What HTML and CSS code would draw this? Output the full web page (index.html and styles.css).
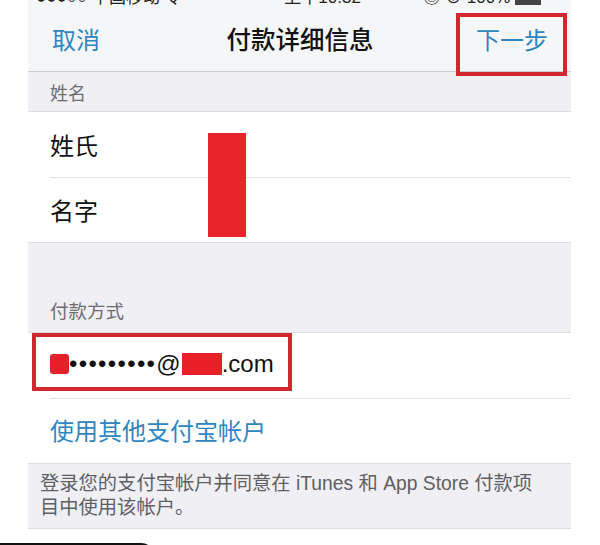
FILE: index.html
```html
<!DOCTYPE html>
<html lang="zh-CN">
<head>
<meta charset="utf-8">
<title>付款详细信息</title>
<link rel="stylesheet" href="styles.css">
</head>
<body>
<div class="phone">
  <div class="statusbar">
    <div class="status-inner">
      <span class="st-left">●●●○○ 中国移动 令</span>
      <span class="st-mid">上午10:32</span>
      <span class="st-right">◎ ⊕ 100% <span class="battery"></span></span>
    </div>
  </div>
  <div class="nav">
    <span class="nav-left">取消</span>
    <span class="nav-title">付款详细信息</span>
    <span class="nav-right">下一步</span>
  </div>
  <div class="section-header">姓名</div>
  <div class="group">
    <div class="row"><span class="label">姓氏</span></div>
    <div class="row inset"><span class="label">名字</span></div>
  </div>
  <div class="gap"><span class="gap-label">付款方式</span></div>
  <div class="group">
    <div class="row"><span class="email"><span class="redact-a"></span><span class="dots">•••••••••</span>@<span class="redact-b"></span>.com</span></div>
    <div class="row inset"><span class="link">使用其他支付宝帐户</span></div>
  </div>
  <div class="footer">登录您的支付宝帐户并同意在 iTunes 和 App Store 付款项目中使用该帐户。</div>

  <div class="mark mark-next"></div>
  <div class="mark mark-email"></div>
  <div class="redact-names"></div>
</div>
<div class="dock"></div>
</body>
</html>
```

FILE: styles.css
```css
* { box-sizing: border-box; }
html, body { margin: 0; padding: 0; background: #ffffff; }
body {
  font-family: "Liberation Sans", "Noto Sans CJK SC", sans-serif;
  color: #111;
  width: 600px;
  height: 545px;
  overflow: hidden;
}
.phone {
  position: relative;
  margin-left: 28px;
  width: 543px;
}
.statusbar {
  height: 9px;
  overflow: hidden;
  background: #f5f6f8;
}
.status-inner {
  margin-top: -12px;
  height: 20px;
  line-height: 20px;
  font-size: 17px;
  color: #222;
  display: flex;
  justify-content: space-between;
  padding: 0 30px 0 8px;
}
.st-mid { margin-left: 40px; }
.battery {
  display: inline-block;
  width: 26px;
  height: 12px;
  background: #444;
  vertical-align: middle;
}
.nav {
  height: 63px;
  background: #f5f6f8;
  border-bottom: 1px solid #cbcbd0;
  display: grid;
  grid-template-columns: 1fr auto 1fr;
  align-items: center;
  padding: 0 23px 3px 24px;
  font-size: 24px;
}
.nav-left { color: #2f86bf; justify-self: start; }
.nav-title { font-weight: 500; color: #111; font-size: 24.5px; }
.nav-right { color: #2f86bf; justify-self: end; }
.section-header {
  height: 40px;
  background: #efeff4;
  border-bottom: 1px solid #dcdce1;
  display: flex;
  align-items: center;
  padding-left: 22px;
  font-size: 18px;
  color: #6d6d72;
}
.group { background: #fff; }
.row {
  height: 65px;
  display: flex;
  align-items: center;
  padding-left: 22px;
  font-size: 24px;
  position: relative;
}
.row.inset::before {
  content: "";
  position: absolute;
  left: 22px;
  right: 0;
  top: 0;
  border-top: 1px solid #e2e2e6;
}
.label { color: #111; }
.gap {
  height: 91px;
  background: #efeff4;
  border-top: 1px solid #dcdce1;
  border-bottom: 1px solid #dcdce1;
  display: flex;
  align-items: flex-end;
  padding: 0 0 9px 22px;
}
.gap-label { font-size: 18.5px; color: #6d6d72; line-height: 22px; }
.email {
  display: flex;
  align-items: center;
  font-family: "Liberation Sans", sans-serif;
  font-size: 24px;
  color: #111;
  margin-top: -4px;
}
.redact-a {
  display: inline-block;
  width: 19px;
  height: 20px;
  background: #e5212a;
  border-radius: 3px;
}
.dots { letter-spacing: 1.3px; font-size: 24px; }
.redact-b {
  display: inline-block;
  width: 40px;
  height: 22px;
  background: #ea2028;
  margin-left: 1px;
}
.link { color: #2f86bf; font-size: 24px; margin-top: -2px; }
.footer {
  background: #efeff4;
  border-top: 1px solid #dcdce1;
  border-bottom: 1px solid #dcdce1;
  padding: 8px 28px 8px 12px;
  font-size: 19.3px;
  line-height: 24px;
  color: #5f5f64;
}
.mark {
  position: absolute;
  border: 4px solid #d2282d;
}
.mark-next { left: 428px; top: 13px; width: 111px; height: 63px; }
.mark-email { left: 4px; top: 333px; width: 260px; height: 58px; }
.redact-names {
  position: absolute;
  left: 180px;
  top: 133px;
  width: 38px;
  height: 104px;
  background: #e9232a;
}
.dock {
  margin-top: 14px;
  width: 155px;
  height: 14px;
  background: #111;
  border-radius: 0 14px 0 0;
}
```
